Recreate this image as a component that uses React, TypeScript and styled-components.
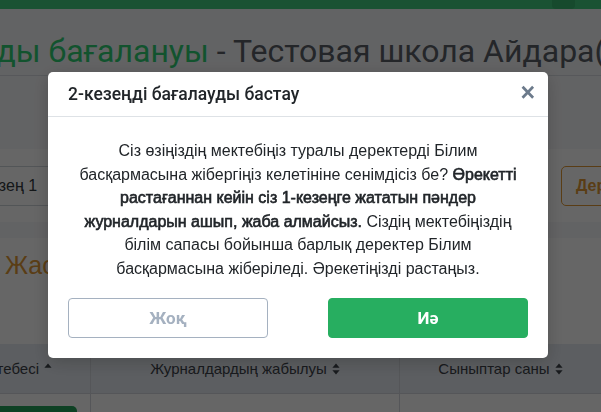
import React from "react";
import styled, { createGlobalStyle } from "styled-components";

const GlobalStyle = createGlobalStyle`
  html, body {
    margin: 0;
    padding: 0;
  }
  body {
    width: 601px;
    height: 412px;
    overflow: hidden;
    background: #f6f7f9;
    font-family: "Liberation Sans", Arial, sans-serif;
    color: #212529;
  }
  * {
    box-sizing: border-box;
  }
`;

// --- Page behind the dialog

const TopBar = styled.div`
  height: 9px;
  background: #41cd7f;
  display: flex;
  justify-content: flex-end;
  padding-right: 26px;
`;

const UserChip = styled.div`
  width: 23px;
  height: 9px;
  border-radius: 0 0 4px 4px;
  background: #38b870;
`;

const HeadingRow = styled.div`
  padding: 24px 0 6px;
  border-bottom: 1px solid #d9dde3;
  overflow: hidden;
  white-space: nowrap;
`;

const PageTitle = styled.h1`
  margin: 0 0 0 -174px;
  font-family: Roboto, "Liberation Sans", sans-serif;
  font-size: 32px;
  line-height: 36px;
  font-weight: 400;
  color: #5a6068;
  span {
    color: #2fcf74;
  }
`;

const FilterBar = styled.div`
  margin-top: 73px;
  height: 73px;
  background: #fff;
  display: grid;
  grid-template-columns: 561px max-content;
  align-items: center;
  overflow: hidden;
`;

const SelectBox = styled.div`
  margin-left: -32px;
  width: 260px;
  height: 40px;
  border: 1px solid #ced4da;
  border-radius: 4px;
  display: flex;
  align-items: center;
  padding-left: 12px;
  font-size: 16px;
  color: #343a40;
`;

const OutlineButton = styled.div<{ $tone: string }>`
  height: 40px;
  padding: 0 14px;
  border: 1px solid ${(p) => p.$tone};
  border-radius: 5px;
  display: flex;
  align-items: center;
  font-size: 16px;
  font-weight: 700;
  color: ${(p) => p.$tone};
  white-space: nowrap;
`;

const Card = styled.div`
  margin-top: 16px;
  background: #fff;
  padding-top: 12px;
  overflow: hidden;
`;

const CardTitle = styled.h2`
  margin: 0;
  padding-left: 5px;
  font-size: 25px;
  line-height: 30px;
  font-weight: 400;
  color: #e29a36;
  white-space: nowrap;
`;

const TableHead = styled.div`
  margin-top: 64px;
  height: 50px;
  display: grid;
  grid-template-columns: 91px 309px 1fr;
  background: #e6ebf2;
  border-bottom: 1px solid #d4d8de;
`;

const HeadCell = styled.div<{ $align?: "end" | "center" }>`
  display: flex;
  align-items: center;
  justify-content: ${(p) => (p.$align === "end" ? "flex-end" : "center")};
  padding-right: ${(p) => (p.$align === "end" ? "38px" : "0")};
  gap: 5px;
  border-right: 1px solid #d4d8de;
  font-size: 15px;
  color: #3d434a;
  white-space: nowrap;
  overflow: hidden;
  svg {
    flex-shrink: 0;
  }
  &:last-child {
    border-right: none;
  }
`;

const TableRow = styled.div`
  display: grid;
  grid-template-columns: 91px 309px 1fr;
  height: 40px;
`;

const BodyCell = styled.div`
  border-right: 1px solid #d4d8de;
  padding-top: 12px;
  &:last-child {
    border-right: none;
  }
`;

const RowButton = styled.div`
  margin-left: -5px;
  width: 82px;
  height: 30px;
  border-radius: 5px;
  background: #25a35a;
`;

const SortIcon = ({ active }: { active?: boolean }) => (
  <svg width="8" height="12" viewBox="0 0 8 12">
    <path d="M4 0.5 L7.6 4.8 H0.4 Z" fill="currentColor" />
    {!active && <path d="M4 11.5 L7.6 7.2 H0.4 Z" fill="currentColor" />}
  </svg>
);

// --- Confirmation dialog

const Backdrop = styled.div`
  position: fixed;
  inset: 0;
  background: rgba(0, 0, 0, 0.6);
  padding: 72px 0 0 48px;
`;

const Dialog = styled.div`
  width: 500px;
  background: #fff;
  border-radius: 5px;
  box-shadow: 0 4px 18px rgba(0, 0, 0, 0.2);
  font-family: "Liberation Sans", Arial, sans-serif;
`;

const DialogHeader = styled.header`
  height: 45px;
  padding: 0 13px 0 20px;
  display: flex;
  align-items: center;
  justify-content: space-between;
  border-bottom: 1px solid #dee2e6;
`;

const DialogTitle = styled.h5`
  margin: 0;
  font-family: Roboto, "Liberation Sans", sans-serif;
  font-size: 17.5px;
  font-weight: 500;
  color: #212529;
`;

const CloseButton = styled.button`
  border: none;
  background: none;
  padding: 0;
  margin-top: -4px;
  font-family: "Liberation Sans", Arial, sans-serif;
  font-size: 25px;
  font-weight: 700;
  line-height: 1;
  color: #6c7a8b;
  cursor: pointer;
`;

// the emphasised words keep the regular advance widths, only the strokes are thickened
const DialogBody = styled.p`
  margin: 0;
  padding: 22px 20px 0;
  text-align: center;
  font-size: 16px;
  line-height: 23.5px;
  color: #212529;
  b {
    font-weight: 400;
    -webkit-text-stroke: 0.6px currentColor;
  }
`;

const DialogFooter = styled.footer`
  padding: 18px 20px 20px;
  display: flex;
  justify-content: space-between;
`;

const DialogButton = styled.button<{ $primary?: boolean }>`
  width: 200px;
  height: 40px;
  border-radius: 4px;
  border: 1px solid ${(p) => (p.$primary ? "#27ae60" : "#a5b1c0")};
  background: ${(p) => (p.$primary ? "#27ae60" : "#fff")};
  color: ${(p) => (p.$primary ? "#fff" : "#a5b1c0")};
  font-family: Roboto, "Liberation Sans", sans-serif;
  font-size: 17px;
  font-weight: 700;
  cursor: pointer;
`;

export default function App() {
  return (
    <>
      <GlobalStyle />
      <TopBar>
        <UserChip />
      </TopBar>
      <HeadingRow>
        <PageTitle>
          <span>Журналдарды бағалануы</span> - Тестовая школа Айдара(kz)
        </PageTitle>
      </HeadingRow>
      <FilterBar>
        <SelectBox>Кезең 1</SelectBox>
        <OutlineButton $tone="#e29a36">Деректерді жіберу</OutlineButton>
      </FilterBar>
      <Card>
        <CardTitle>Жасалған есептер</CardTitle>
        <TableHead>
          <HeadCell $align="end">
            Мектеп тебесі <SortIcon active />
          </HeadCell>
          <HeadCell>
            Журналдардың жабылуы <SortIcon />
          </HeadCell>
          <HeadCell>
            Сыныптар саны <SortIcon />
          </HeadCell>
        </TableHead>
        <TableRow>
          <BodyCell>
            <RowButton />
          </BodyCell>
          <BodyCell />
          <BodyCell />
        </TableRow>
      </Card>

      <Backdrop>
        <Dialog role="dialog">
          <DialogHeader>
            <DialogTitle>2-кезеңді бағалауды бастау</DialogTitle>
            <CloseButton aria-label="Жабу">×</CloseButton>
          </DialogHeader>
          <DialogBody>
            Сіз өзіңіздің мектебіңіз туралы деректерді Білим
            <br />
            басқармасына жібергіңіз келетініне сенімдісіз бе? <b>Өрекетті</b>
            <br />
            <b>растағаннан кейін сіз 1-кезеңге жататын пәндер</b>
            <br />
            <b>журналдарын ашып, жаба алмайсыз.</b> Сіздің мектебіңіздің
            <br />
            білім сапасы бойынша барлық деректер Білим
            <br />
            басқармасына жіберіледі. Әрекетіңізді растаңыз.
          </DialogBody>
          <DialogFooter>
            <DialogButton>Жоқ</DialogButton>
            <DialogButton $primary>Иә</DialogButton>
          </DialogFooter>
        </Dialog>
      </Backdrop>
    </>
  );
}
